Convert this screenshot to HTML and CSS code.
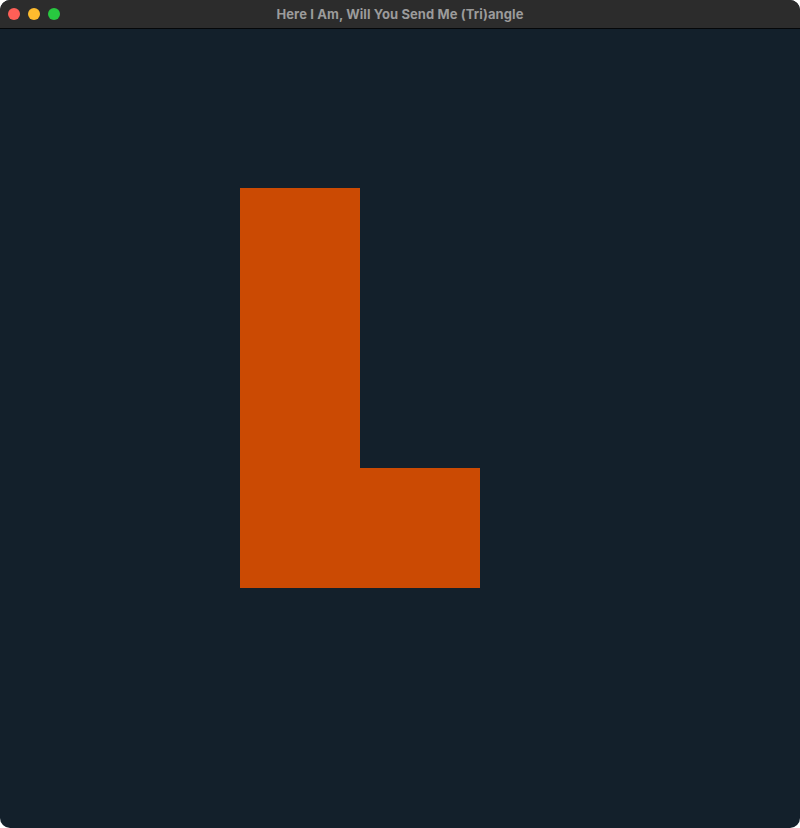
FILE: index.html
```html
<!DOCTYPE html>
<html>
<head>
<meta charset="utf-8">
<link rel="stylesheet" href="styles.css">
</head>
<body>
<div class="window">
  <div class="titlebar">
    <div class="lights">
      <span class="light red"></span>
      <span class="light yellow"></span>
      <span class="light green"></span>
    </div>
    <div class="title">Here I Am, Will You Send Me (Tri)angle</div>
  </div>
  <div class="content">
    <div class="shape">
      <div class="block tall"></div>
      <div class="block foot"></div>
    </div>
  </div>
</div>
</body>
</html>
```
FILE: styles.css
```css
html, body {
  margin: 0;
  padding: 0;
  background: #ffffff;
}
.window {
  width: 800px;
  height: 828px;
  border-radius: 10px;
  overflow: hidden;
  display: flex;
  flex-direction: column;
  background: #13202b;
}
.titlebar {
  height: 28px;
  flex: 0 0 auto;
  background: #2c2c2c;
  border-bottom: 1px solid #050709;
  position: relative;
  display: flex;
  align-items: center;
  justify-content: center;
}
.lights {
  position: absolute;
  left: 8px;
  top: 8px;
  display: flex;
  gap: 8px;
}
.light {
  width: 12px;
  height: 12px;
  border-radius: 50%;
  display: block;
}
.red { background: #fe5f57; }
.yellow { background: #febc2e; }
.green { background: #28c840; }
.title {
  font-family: "Inter", "Liberation Sans", sans-serif;
  font-weight: 700;
  font-size: 13px;
  color: #9b9b9b;
  letter-spacing: 0.1px;
}
.content {
  flex: 1;
  padding: 159px 0 0 240px;
}
.shape {
  display: grid;
  grid-template-columns: 120px 120px;
  grid-template-rows: 280px 120px;
}
.block {
  background: #cb4a03;
}
.tall {
  grid-column: 1;
  grid-row: 1 / span 2;
}
.foot {
  grid-column: 2;
  grid-row: 2;
}
```
